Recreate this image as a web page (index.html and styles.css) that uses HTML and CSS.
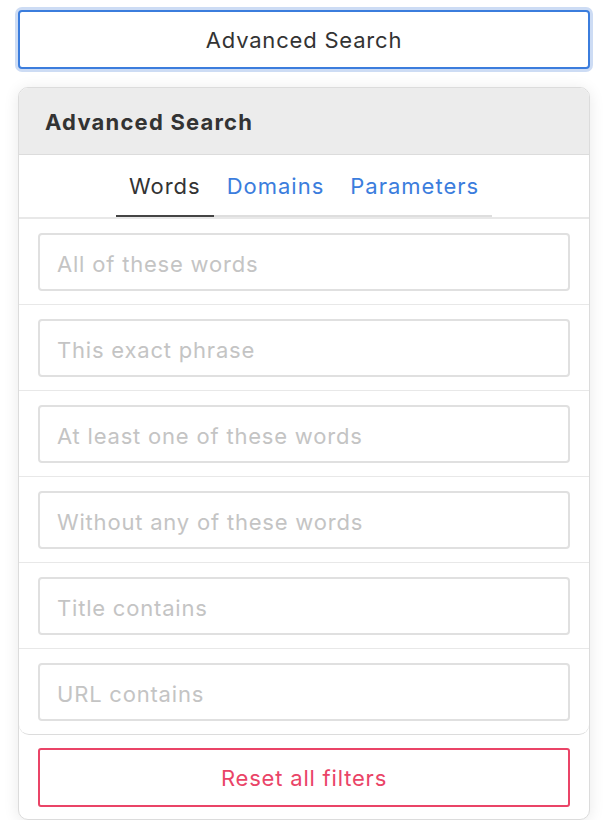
FILE: index.html
```html
<!DOCTYPE html>
<html>
<head>
<meta charset="utf-8">
<link rel="stylesheet" href="styles.css">
</head>
<body>
<div class="wrap">
  <button class="toggle">Advanced Search</button>
  <div class="card">
    <div class="panel">
      <div class="panel-header">Advanced Search</div>
      <div class="tabs-row">
        <ul class="tabs">
          <li class="tab active">Words</li>
          <li class="tab">Domains</li>
          <li class="tab">Parameters</li>
        </ul>
      </div>
      <div class="fields">
        <div class="field"><input class="input" placeholder="All of these words"></div>
        <div class="field"><input class="input" placeholder="This exact phrase"></div>
        <div class="field"><input class="input" placeholder="At least one of these words"></div>
        <div class="field"><input class="input" placeholder="Without any of these words"></div>
        <div class="field"><input class="input" placeholder="Title contains"></div>
        <div class="field"><input class="input" placeholder="URL contains"></div>
      </div>
    </div>
    <div class="footer">
      <button class="reset">Reset all filters</button>
    </div>
  </div>
</div>
</body>
</html>
```
FILE: styles.css
```css
* { box-sizing: border-box; }
html, body { margin: 0; padding: 0; background: #fff; }
body {
  font-family: Inter, "Noto Sans", "Liberation Sans", sans-serif;
  color: #333;
}
.wrap {
  padding: 10px 20px 0 18px;
  display: flex;
  flex-direction: column;
  gap: 18px;
}
.toggle {
  height: 59px;
  width: 100%;
  background: #fff;
  border: 2px solid #3b7ddd;
  border-radius: 4px;
  box-shadow: 0 0 0 3px #cddcf4;
  font-family: inherit;
  font-size: 22px;
  letter-spacing: 0.8px;
  color: #333;
  cursor: pointer;
}
.card {
  border: 1px solid #dcdcdc;
  border-radius: 10px;
  box-shadow: 0 2px 16px rgba(0,0,0,0.09);
  background: #fff;
  padding-bottom: 12px;
}
.panel {
  border-bottom: 1px solid #dcdcdc;
  border-radius: 0 0 10px 10px;
  overflow: hidden;
}
.panel-header {
  height: 67px;
  background: #ececec;
  border-bottom: 1px solid #dcdcdc;
  border-radius: 9px 9px 0 0;
  padding: 1px 26px 0;
  display: flex;
  align-items: center;
  font-weight: 700;
  font-size: 22px;
  letter-spacing: 1.2px;
  color: #333;
}
.tabs-row {
  display: flex;
  justify-content: center;
  border-bottom: 2px solid #e8e8e8;
}
.tabs {
  list-style: none;
  margin: 0;
  padding: 0;
  display: flex;
  border-bottom: 2px solid #dedede;
}
.tab {
  padding: 16px 13px 14px;
  font-size: 22px;
  letter-spacing: 1px;
  line-height: 30px;
  color: #3b7ddd;
  margin-bottom: -2px;
  border-bottom: 2px solid transparent;
}
.tab.active {
  color: #333;
  border-bottom-color: #444;
}
.fields { display: flex; flex-direction: column; }
.field {
  padding: 14px 19px 13px;
  border-top: 1px solid #e8e8e8;
}
.field:first-child { border-top: none; padding-top: 14px; }
.input {
  display: block;
  width: 100%;
  height: 58px;
  border: 2px solid #e0e0e0;
  border-radius: 4px;
  padding: 3px 17px 0;
  font-family: inherit;
  font-size: 22px;
  letter-spacing: 0.8px;
  color: #333;
  outline: none;
}
.input::placeholder { color: #c4c4c4; }
.footer {
  padding: 13px 19px 0;
}
.reset {
  display: block;
  width: 100%;
  height: 59px;
  padding-top: 2px;
  background: #fff;
  border: 2px solid #ea4467;
  border-radius: 3px;
  font-family: inherit;
  font-size: 22px;
  letter-spacing: 0.8px;
  color: #ea4467;
  cursor: pointer;
}
```
